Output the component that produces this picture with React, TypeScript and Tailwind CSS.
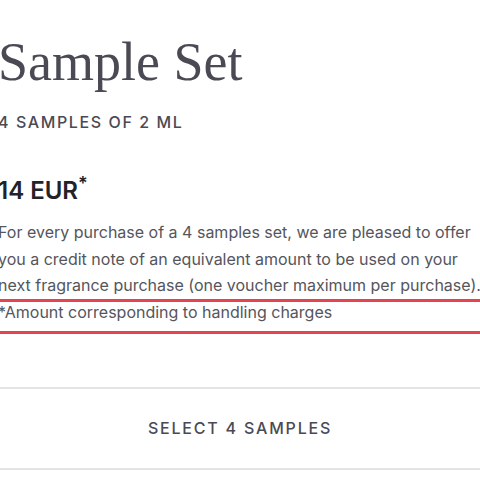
export default function App() {
  return (
    <div className="w-[480px] h-[480px] overflow-hidden bg-white">
      <div className="-ml-[2px] w-[484px] pt-[35px]">
        {/* Title */}
        <h1 className="font-['Liberation_Serif',serif] text-[54px] leading-none text-[#4a4a54] whitespace-nowrap">
          Sample Set
        </h1>
        <p className="mt-[23px] font-['Inter',sans-serif] text-[16px] leading-[20px] font-medium tracking-[1.6px] text-[#4a4a54] whitespace-nowrap">
          4 SAMPLES OF 2 ML
        </p>

        {/* Price */}
        <div className="mt-[45px] font-['Inter',sans-serif] text-[24px] leading-[28px] font-semibold text-[#222228] whitespace-nowrap">
          14 EUR<sup>*</sup>
        </div>

        {/* Description */}
        <p className="mt-[14px] font-['Inter',sans-serif] text-[16px] leading-[26.5px] text-[#55555c] whitespace-nowrap">
          For every purchase of a 4 samples set, we are pleased to offer
          <br />
          you a credit note of an equivalent amount to be used on your
          <br />
          next fragrance purchase (one voucher maximum per purchase).
        </p>
        <div className="border-y-[3px] border-[#e5434f] pb-[9px] font-['Inter',sans-serif] text-[16px] leading-[20px] text-[#55555c] whitespace-nowrap">
          *Amount corresponding to handling charges
        </div>

        {/* Select button */}
        <div className="mt-[53px] border-y-2 border-[#e4e4e4] h-[83px] flex items-center justify-center">
          <span className="font-['Inter',sans-serif] text-[16px] font-medium tracking-[1.8px] text-[#4a4a54]">
            SELECT 4 SAMPLES
          </span>
        </div>
      </div>
    </div>
  )
}
